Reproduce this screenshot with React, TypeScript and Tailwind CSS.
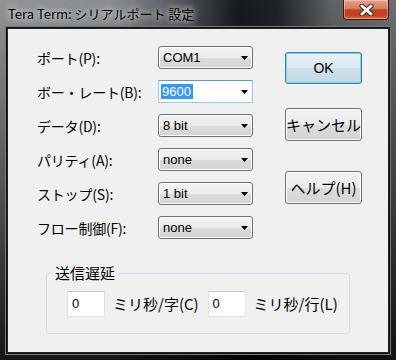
import React from 'react'
import clsx from 'clsx'

// ─── Tera Term serial port settings dialog (Win7 look) ───────────────────────

const rows = [
  { label: 'ポート(P):', value: 'COM1' },
  { label: 'ボー・レート(B):', value: '9600', focused: true },
  { label: 'データ(D):', value: '8 bit' },
  { label: 'パリティ(A):', value: 'none' },
  { label: 'ストップ(S):', value: '1 bit' },
  { label: 'フロー制御(F):', value: 'none' },
]

const jp = 'font-["Noto_Sans_CJK_JP",sans-serif]'
const latin = 'font-["Liberation_Sans",sans-serif]'

export default function App() {
  return (
    <div
      className={clsx(
        'relative flex h-[360px] w-[396px] flex-col overflow-hidden text-black',
        'bg-[linear-gradient(180deg,rgba(0,0,0,0)_0px,rgba(0,0,0,0.15)_60px,rgba(0,0,0,0.85)_360px),linear-gradient(90deg,#929598_0%,#8b8e91_28%,#55595d_45%,#16191d_60%,#1f2327_70%,#5f6366_84%,#6d7174_100%)]',
        jp,
      )}
    >
      {/* Title bar */}
      <div className="flex h-[28px] shrink-0 items-start justify-between pr-[7px]">
        <span className="pl-[8px] pt-[5px] text-[13px] leading-[18px] [text-shadow:0_0_6px_rgba(255,255,255,0.9),0_0_10px_rgba(255,255,255,0.6)]">
          Tera Term: シリアルポート 設定
        </span>
        <CloseButton />
      </div>

      {/* Client area */}
      <div className="mx-[7px] h-[325px] shrink-0 border border-[#202427] bg-[#f0f0f0] shadow-[0_0_0_1px_#0d1013,0_0_0_2px_#777b80]">
        <div className="flex items-start">
          {/* Settings rows */}
          <div className="flex flex-col gap-[11px] pl-[29px] pt-[17px]">
            {rows.map((r) => (
              <div key={r.label} className="flex h-[23px] items-center">
                <span className="w-[121px] text-[14px] leading-none tracking-[-0.2px]">{r.label}</span>
                <Combo value={r.value} focused={r.focused} />
              </div>
            ))}
          </div>

          {/* Buttons */}
          <div className="ml-[32px] flex flex-col pt-[23px]">
            <Button primary className={clsx('h-[32px] text-[14px]', latin)}>OK</Button>
            <Button className="mt-[24px] h-[33px] text-[15px]">キャンセル</Button>
            <Button className="mt-[30px] h-[33px] text-[15px]">ヘルプ(H)</Button>
          </div>
        </div>

        {/* Send delay group */}
        <div className="relative ml-[38px] mt-[34px] flex h-[61px] w-[304px] items-center rounded-[3px] border border-[#d5dfe5] pl-[20px]">
          <span className="absolute -top-[11px] left-[6px] bg-[#f0f0f0] px-[2px] text-[15px] leading-[20px]">
            送信遅延
          </span>
          <TextBox value="0" />
          <span className="ml-[8px] text-[15px] leading-none">ミリ秒/字(C)</span>
          <TextBox value="0" className="ml-[9px]" />
          <span className="ml-[8px] text-[15px] leading-none">ミリ秒/行(L)</span>
        </div>
      </div>
    </div>
  )
}

// ─── Controls ────────────────────────────────────────────────────────────────

function Combo({ value, focused }: { value: string; focused?: boolean }) {
  return (
    <div
      className={clsx(
        'flex h-[23px] w-[95px] items-center justify-between border pl-[2px] pr-[4px]',
        focused
          ? 'border-[#9fc6ec] border-t-[#5b9ad8] bg-white'
          : 'rounded-[3px] border-[#707070] bg-[linear-gradient(180deg,#f3f3f3_0%,#ebebeb_50%,#dddddd_51%,#d3d3d3_100%)] shadow-[inset_0_0_0_1px_#fbfbfb]',
      )}
    >
      <span
        className={clsx(
          'text-[13px] leading-[15px]',
          latin,
          focused ? 'bg-[#3399ff] pl-[1px] pr-[2px] text-white' : 'pl-[2px]',
        )}
      >
        {value}
      </span>
      <svg width="7" height="4" viewBox="0 0 7 4">
        <polygon points="0,0 7,0 3.5,4" fill="#000" />
      </svg>
    </div>
  )
}

function Button({
  children,
  primary,
  className,
}: {
  children: React.ReactNode
  primary?: boolean
  className?: string
}) {
  return (
    <div
      className={clsx(
        'flex w-[77px] items-center justify-center rounded-[3px] border leading-none',
        primary
          ? 'border-[#3c7fb1] bg-[linear-gradient(180deg,#e8f2f7_0%,#dde9f0_50%,#cfe0e9_51%,#c5d9e4_100%)] shadow-[inset_0_0_0_1px_#7fd0f0]'
          : 'border-[#707070] bg-[linear-gradient(180deg,#f3f3f3_0%,#ebebeb_50%,#dddddd_51%,#d3d3d3_100%)] shadow-[inset_0_0_0_1px_#fbfbfb]',
        className,
      )}
    >
      {children}
    </div>
  )
}

function TextBox({ value, className }: { value: string; className?: string }) {
  return (
    <div
      className={clsx(
        'flex h-[26px] w-[38px] items-center border border-[#dfe3e8] border-t-[#c5c9cf] bg-white pl-[4px] text-[13px]',
        latin,
        className,
      )}
    >
      {value}
    </div>
  )
}

function CloseButton() {
  return (
    <div className="flex h-[20px] w-[46px] items-center justify-center rounded-b-[4px] border border-t-0 border-[#4a1308] bg-[linear-gradient(180deg,#e6a291_0%,#d77b63_45%,#c2401f_52%,#c4421f_80%,#dd6a40_100%)] shadow-[inset_0_0_0_1px_rgba(255,220,210,0.45)]">
      <svg width="15" height="12" viewBox="0 0 15 12">
        <path d="M3 2 L12 10 M12 2 L3 10" stroke="#3a2a2a" strokeWidth="5" strokeLinecap="round" />
        <path d="M3 2 L12 10 M12 2 L3 10" stroke="#fff" strokeWidth="3" strokeLinecap="round" />
      </svg>
    </div>
  )
}
